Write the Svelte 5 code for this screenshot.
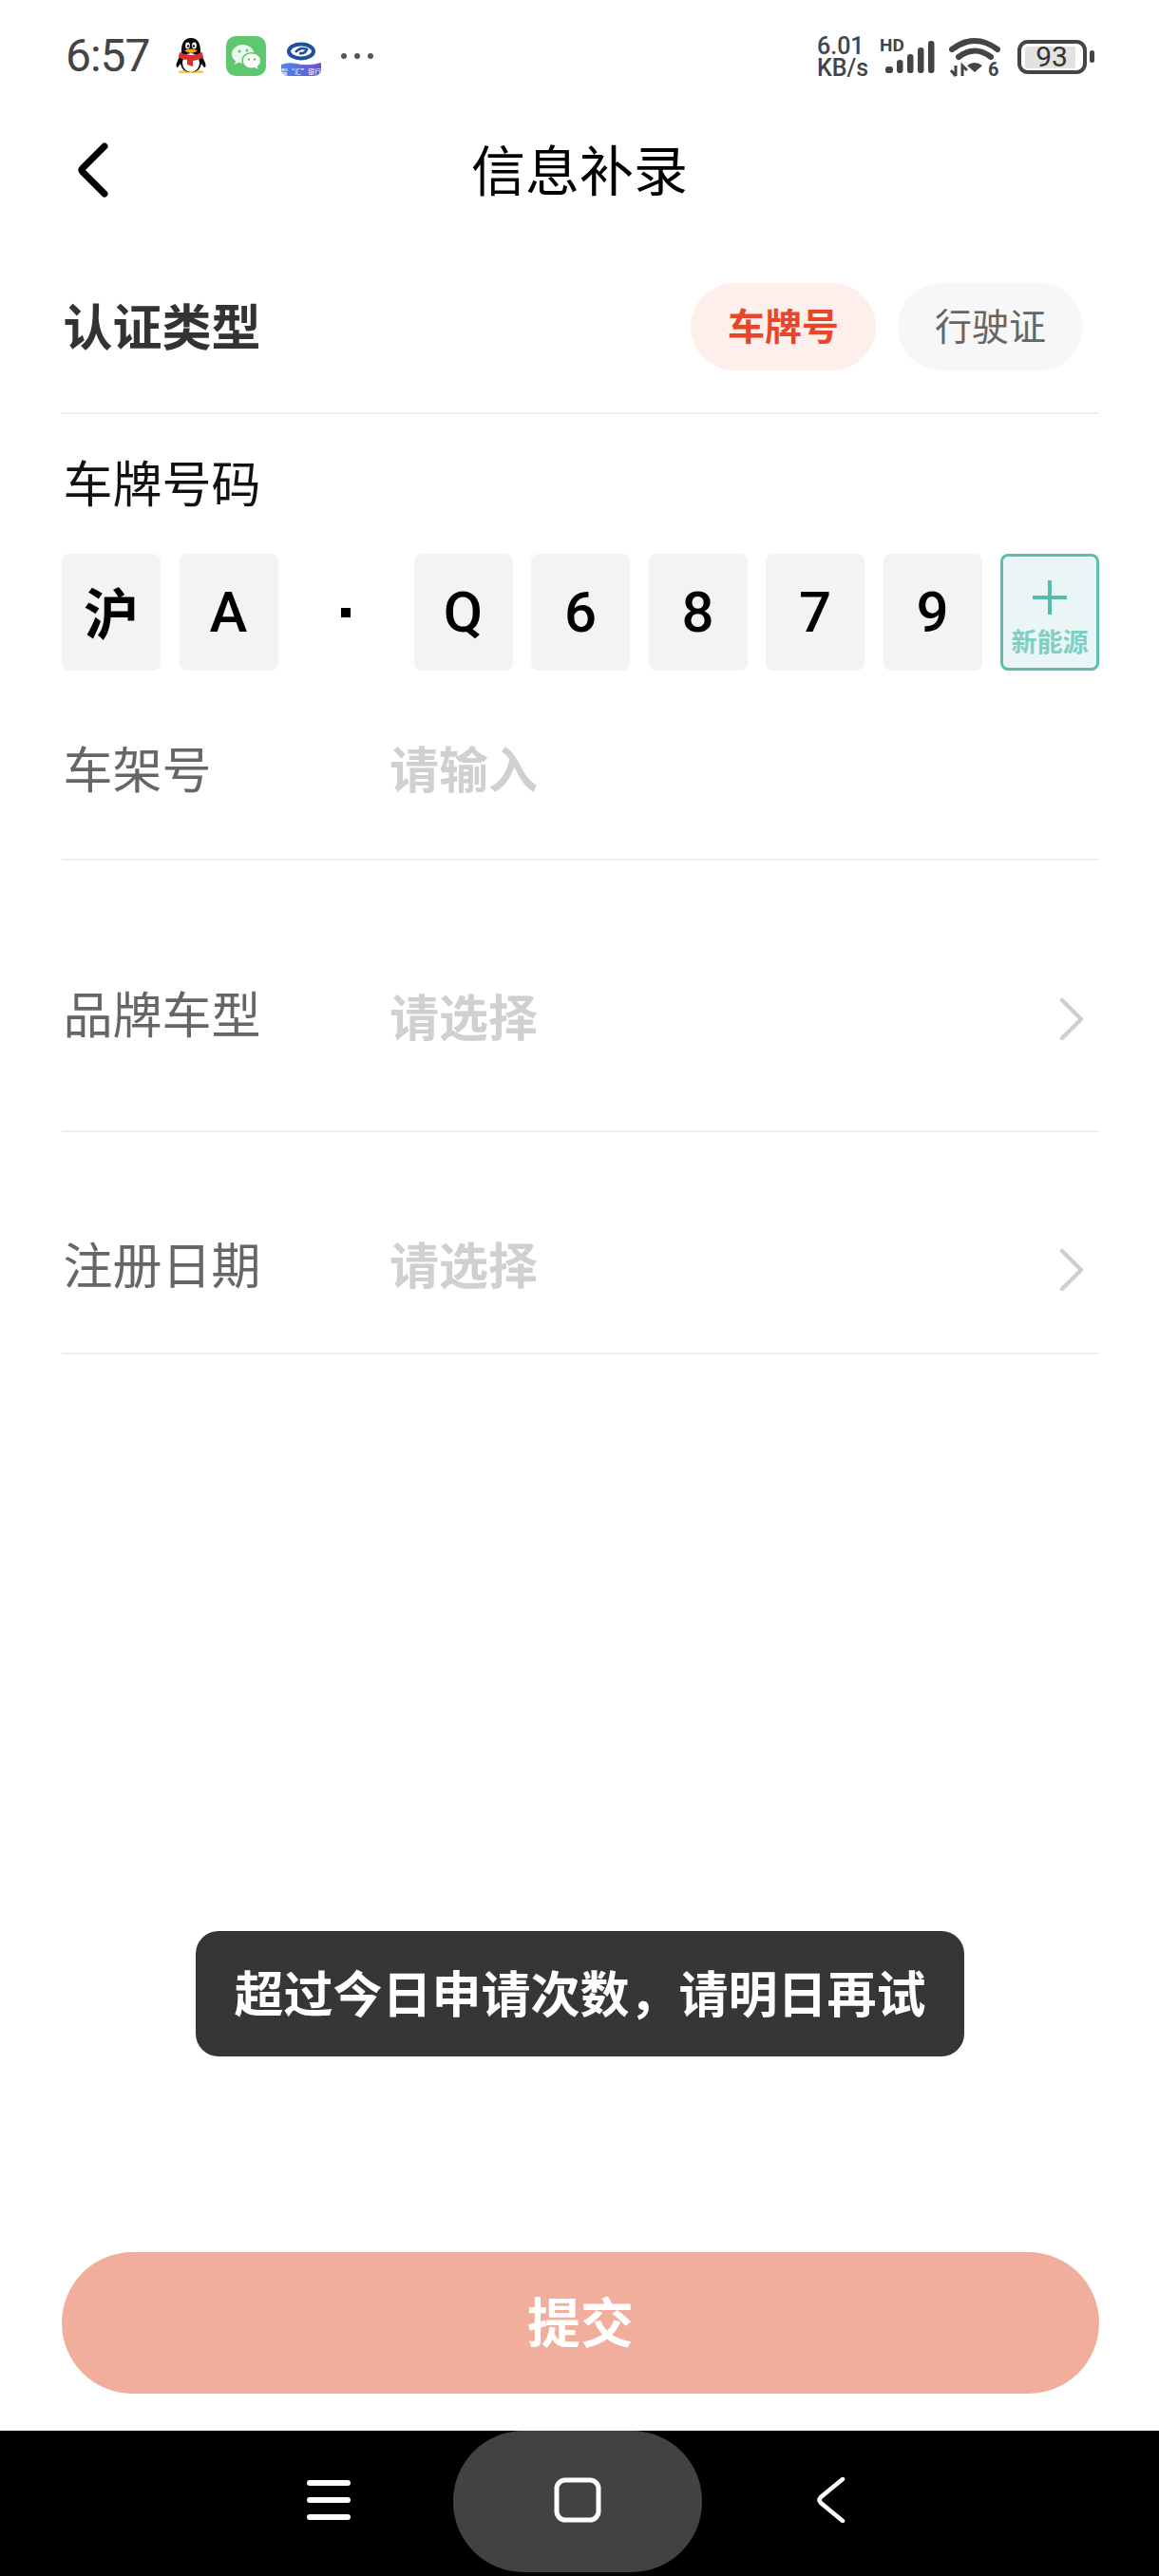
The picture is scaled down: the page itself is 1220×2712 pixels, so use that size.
<script>
  const plate = ["沪", "A", "·", "Q", "6", "8", "7", "9"];
  const arrowBack = "M30 4 L7 27 Q5 29 7 31 L30 54";
</script>

<div class="page">
  <main class="main">
    <!-- status bar -->
    <div class="status">
      <span class="time">6:57</span>
      <svg class="qq" viewBox="0 0 32 38" width="32" height="38">
        <path d="M5 37 Q2 37 3 35 L10 33 L22 33 L29 35 Q30 37 27 37 Z" fill="#f4c96a" />
        <path d="M16 0 C8 0 6 7 6 13 C6 17 4 19 2 24 C0 28 0 31 2 31 L5 27 C6 33 10 36 16 36 C22 36 26 33 27 27 L30 31 C32 31 32 28 30 24 C28 19 26 17 26 13 C26 7 24 0 16 0 Z" fill="#0a0a0a" />
        <ellipse cx="16" cy="26" rx="9" ry="10" fill="#fff" />
        <path d="M4 15 Q16 21 28 15 L29 21 Q20 24 18 24 L18 30 L12 28 L12 23 Q6 23 3 20 Z" fill="#d8302c" />
        <ellipse cx="12.5" cy="8" rx="2.4" ry="3.4" fill="#fff" />
        <ellipse cx="19.5" cy="8" rx="2.4" ry="3.4" fill="#fff" />
        <circle cx="13" cy="8.5" r="1.2" fill="#111" />
        <circle cx="19" cy="8.5" r="1.2" fill="#111" />
        <path d="M9 13 Q16 10 23 13 Q16 19 9 13 Z" fill="#f5a623" />
      </svg>
      <svg class="wechat" viewBox="0 0 42 42" width="42" height="42">
        <rect width="42" height="42" rx="10" fill="#5ec86f" />
        <path d="M18 9 C11 9 6 13.5 6 19 C6 22 7.5 24.5 10 26.3 L9 30 L13.2 27.8 C14.5 28.2 15.8 28.4 17 28.4 C16.6 27.4 16.5 26.6 16.5 25.7 C16.5 20.8 21 17 26.8 17 L29.4 17.2 C28 12.6 23.5 9 18 9 Z" fill="#e9f8ec" />
        <path d="M27 18.5 C21.8 18.5 18 22 18 26 C18 30 21.8 33.5 27 33.5 C28 33.5 29.2 33.3 30.2 33 L33.5 34.8 L32.7 31.8 C34.8 30.3 36 28.3 36 26 C36 22 32.2 18.5 27 18.5 Z" fill="#fff" />
        <circle cx="14" cy="16" r="1.5" fill="#5ec86f" />
        <circle cx="22" cy="15" r="1.5" fill="#5ec86f" />
        <circle cx="24" cy="24.5" r="1.2" fill="#5ec86f" />
        <circle cx="30" cy="24.5" r="1.2" fill="#5ec86f" />
      </svg>
      <svg class="bank" viewBox="0 0 42 42" width="42" height="42">
        <defs>
          <linearGradient id="bankWave" x1="0" x2="1" y1="0" y2="0">
            <stop offset="0" stop-color="#4c86e6" />
            <stop offset="1" stop-color="#6a4fd6" />
          </linearGradient>
        </defs>
        <ellipse cx="21" cy="16" rx="13" ry="7.5" fill="none" stroke="#1f4f9f" stroke-width="4" />
        <path d="M15 17 Q20 11 27 14 Q25 19 19 18" fill="none" stroke="#1f4f9f" stroke-width="2.6" />
        <path d="M0 30 Q8 27 16 29 Q28 32 42 28 L42 35 Q42 42 34 42 L8 42 Q0 42 0 35 Z" fill="url(#bankWave)" />
        <text x="21" y="39.5" class="bank-text">智“汇”银行</text>
      </svg>
      <span class="dots"><i></i><i></i><i></i></span>

      <div class="status-right">
        <div class="speed">
          <span>6.01</span>
          <span>KB/s</span>
        </div>
        <svg viewBox="0 0 58 40" width="58" height="40" class="signal">
          <text x="0" y="14" class="hd">HD</text>
          <rect x="6" y="30" width="8" height="7" rx="3" fill="#444" />
          <rect x="18" y="23" width="6.5" height="14" rx="3" fill="#444" />
          <rect x="29" y="17" width="6.5" height="20" rx="3" fill="#444" />
          <rect x="40" y="10" width="6.5" height="27" rx="3" fill="#444" />
          <rect x="51" y="3" width="6.5" height="34" rx="3" fill="#444" />
        </svg>
        <svg viewBox="0 -6 54 54" width="54" height="54" class="wifi">
          <path d="M3 13 Q27 -5 51 13" fill="none" stroke="#444" stroke-width="6" stroke-linecap="round" />
          <path d="M10 21 Q27 8 44 21" fill="none" stroke="#444" stroke-width="6" stroke-linecap="round" />
          <path d="M19 30 Q27 24 35 30 L27 37 Z" fill="#444" />
          <path d="M7 30 L7 41 M2 35 L7 41" fill="none" stroke="#444" stroke-width="3" />
          <path d="M14 41 L14 30 L19 35" fill="none" stroke="#444" stroke-width="3" />
          <text x="41" y="41" class="wifi-six">6</text>
        </svg>
        <svg viewBox="0 0 81 36" width="81" height="36" class="battery">
          <rect x="2" y="2" width="69" height="32" rx="9" fill="none" stroke="#444" stroke-width="4" />
          <rect x="8" y="7" width="53" height="23" rx="2" fill="#e2e2e2" />
          <text x="36" y="28" class="battery-text">93</text>
          <rect x="76" y="11" width="5" height="13" rx="2.5" fill="#444" />
        </svg>
      </div>
    </div>

    <!-- title bar -->
    <header class="nav">
      <svg class="back" viewBox="0 0 36 58" width="36" height="58">
        <path d={arrowBack} fill="none" stroke="#000" stroke-width="7" stroke-linecap="round" />
      </svg>
      <h1>信息补录</h1>
    </header>

    <section class="form">
      <div class="auth">
        <span class="auth-title">认证类型</span>
        <div class="tabs">
          <span class="tab active">车牌号</span>
          <span class="tab">行驶证</span>
        </div>
      </div>

      <div class="plate-label">车牌号码</div>
      <div class="plate">
        {#each plate as ch}
          {#if ch === "·"}
            <span class="sep"></span>
          {:else}
            <span class="cell" class:zh={ch === "沪"}>{ch}</span>
          {/if}
        {/each}
        <span class="cell-new">
          <svg viewBox="0 0 36 36" width="36" height="36">
            <path d="M18 1 V35 M1 18 H35" stroke="#52bdac" stroke-width="4" stroke-linecap="round" />
          </svg>
          <span>新能源</span>
        </span>
      </div>

      <div class="row row-vin">
        <span class="label">车架号</span>
        <span class="hint">请输入</span>
      </div>
      <div class="row row-brand">
        <span class="label">品牌车型</span>
        <span class="hint shift">请选择</span>
        <svg class="more" viewBox="0 0 26 46" width="26" height="46">
          <path d="M3 3 L23 23 L3 43" fill="none" stroke="#cfcfcf" stroke-width="4.5" stroke-linecap="round" stroke-linejoin="round" />
        </svg>
      </div>
      <div class="row row-date">
        <span class="label">注册日期</span>
        <span class="hint">请选择</span>
        <svg class="more" viewBox="0 0 26 46" width="26" height="46">
          <path d="M3 3 L23 23 L3 43" fill="none" stroke="#cfcfcf" stroke-width="4.5" stroke-linecap="round" stroke-linejoin="round" />
        </svg>
      </div>
    </section>

    <button class="submit">提交</button>
  </main>

  <!-- system navigation -->
  <footer class="sysbar">
    <svg viewBox="0 0 46 42" width="46" height="42" class="sys-menu">
      <path d="M3 3 H43 M3 21 H43 M3 39 H43" stroke="#fff" stroke-width="6" stroke-linecap="round" />
    </svg>
    <span class="home">
      <svg viewBox="0 0 50 48" width="50" height="48">
        <rect x="3" y="3" width="44" height="42" rx="9" fill="none" stroke="#fff" stroke-width="5" />
      </svg>
    </span>
    <svg viewBox="0 0 30 48" width="30" height="48" class="sys-back">
      <path d="M27 2 L4 21 Q1 24 4 27 L27 46" fill="none" stroke="#fff" stroke-width="4.5" stroke-linecap="round" />
    </svg>
  </footer>

  <div class="toast">超过今日申请次数&#65292;请明日再试</div>
</div>

<style>
  :global(body) {
    margin: 0;
    background: #fff;
  }

  .page {
    position: relative;
    width: 1220px;
    height: 2712px;
    display: flex;
    flex-direction: column;
    overflow: hidden;
    font-family: "Noto Sans CJK SC", "Noto Sans", sans-serif;
    color: #111;
  }

  .main {
    flex: 1;
    display: flex;
    flex-direction: column;
    padding: 0 63px 39px 65px;
  }

  /* status bar */
  .status {
    height: 118px;
    display: flex;
    align-items: center;
    padding: 0 5px 0 4px;
    color: #444;
  }

  .time {
    font-family: Roboto, sans-serif;
    font-size: 48px;
    font-weight: 400;
    letter-spacing: -1px;
    width: 88px;
    line-height: 1;
    white-space: nowrap;
  }

  .qq {
    margin-left: 28px;
  }

  .wechat {
    margin-left: 21px;
  }

  .bank {
    margin-left: 16px;
  }

  .bank-text {
    font-size: 7px;
    fill: #fff;
    text-anchor: middle;
  }

  .dots {
    display: flex;
    gap: 8px;
    margin-left: 21px;
  }

  .dots i {
    width: 6px;
    height: 6px;
    border-radius: 50%;
    background: #555;
  }

  .status-right {
    margin-left: auto;
    display: flex;
    align-items: center;
    margin-top: 1px;
  }

  .speed {
    width: 58px;
    display: flex;
    flex-direction: column;
    font-family: Roboto, sans-serif;
    font-weight: 500;
    font-size: 25px;
    line-height: 23px;
    color: #444;
  }

  .signal {
    margin-left: 8px;
    overflow: visible;
  }

  .hd {
    font-family: Roboto, sans-serif;
    font-weight: 700;
    font-size: 19px;
    fill: #444;
  }

  .wifi {
    margin-left: 15px;
  }

  .wifi-six {
    font-family: Roboto, sans-serif;
    font-weight: 700;
    font-size: 20px;
    fill: #444;
  }

  .battery {
    margin-left: 18px;
  }

  .battery-text {
    font-family: Roboto, sans-serif;
    font-size: 30px;
    fill: #333;
    text-anchor: middle;
  }

  /* title */
  .nav {
    position: relative;
    height: 122px;
    display: flex;
    align-items: center;
    justify-content: center;
    padding: 0 2px 6px 0;
    box-sizing: border-box;
  }

  .back {
    position: absolute;
    left: 15px;
    top: 32px;
  }

  .nav h1 {
    margin: 0;
    font-size: 57px;
    font-weight: 400;
    line-height: 80px;
    color: #000;
  }

  /* form */
  .form {
    display: flex;
    flex-direction: column;
  }

  .auth {
    height: 180px;
    margin-top: 14px;
    display: flex;
    align-items: center;
    justify-content: space-between;
    border-bottom: 2px solid #eee;
    box-sizing: content-box;
  }

  .auth-title {
    font-size: 52px;
    font-weight: 700;
    line-height: 60px;
    color: #333;
    padding: 0 0 4px 1.5px;
  }

  .tabs {
    display: flex;
    gap: 23px;
    padding-right: 17px;
  }

  .tab {
    width: 195px;
    height: 92px;
    border-radius: 46px;
    background: #f7f7f7;
    color: #666;
    font-size: 39px;
    display: flex;
    align-items: center;
    justify-content: center;
    padding-bottom: 6px;
    box-sizing: border-box;
  }

  .tab.active {
    background: #fdefec;
    color: #e8452a;
    font-weight: 700;
  }

  .plate-label {
    margin-top: 41px;
    padding-left: 1.5px;
    font-size: 52px;
    line-height: 60px;
    color: #111;
  }

  .plate {
    margin-top: 46px;
    display: grid;
    grid-template-columns: repeat(9, 1fr);
    gap: 19.5px;
    height: 123px;
  }

  .cell,
  .sep,
  .cell-new {
    display: flex;
    align-items: center;
    justify-content: center;
    border-radius: 8px;
    box-sizing: border-box;
  }

  .cell {
    background: #f2f3f5;
    font-family: Roboto, sans-serif;
    font-size: 60px;
    font-weight: 500;
    color: #000;
  }

  .cell.zh {
    font-family: "Noto Sans CJK SC", sans-serif;
    font-size: 58px;
    font-weight: 700;
    padding-bottom: 4px;
  }

  .sep::before {
    content: "";
    width: 10px;
    height: 10px;
    background: #000;
  }

  .cell-new {
    flex-direction: column;
    justify-content: flex-start;
    border: 3px solid #5cbfae;
    background: #e9f6f5;
    color: #7fcfc4;
    padding-top: 25px;
  }

  .cell-new span {
    font-size: 27px;
    font-weight: 700;
    line-height: 32px;
    margin-top: 12px;
    white-space: nowrap;
  }

  .row {
    display: flex;
    align-items: center;
    border-bottom: 2px solid #efefef;
  }

  .row-vin {
    padding: 72px 0 66px;
  }

  .row-brand {
    padding: 130px 0 94px;
  }

  .row-date {
    padding: 108px 0 64px;
  }

  .label {
    width: 346px;
    padding-left: 1.5px;
    box-sizing: border-box;
    font-size: 52px;
    line-height: 60px;
    color: #666;
  }

  .hint {
    flex: 1;
    font-size: 52px;
    font-weight: 700;
    line-height: 60px;
    color: #d0d0d0;
    margin-left: -1px;
  }

  .hint.shift {
    margin-top: 3px;
    margin-bottom: -3px;
  }

  .more {
    margin: 7px 16px -7px 0;
  }

  .submit {
    margin-top: auto;
    height: 149px;
    width: 1092px;
    border: none;
    border-radius: 75px;
    background: #f2ae9d;
    color: #fff;
    font-family: inherit;
    font-size: 56px;
    font-weight: 700;
    padding: 0 0 8px;
  }

  /* system bar */
  .sysbar {
    position: relative;
    height: 153px;
    background: #000;
    flex-shrink: 0;
    display: flex;
    align-items: flex-start;
    padding-left: 323px;
  }

  .sys-menu {
    margin-top: 52px;
  }

  .home {
    width: 262px;
    height: 149px;
    margin: 0 121px 0 108px;
    border-radius: 74px;
    background: #424242;
    display: flex;
    align-items: center;
    justify-content: center;
    padding-bottom: 4px;
    box-sizing: border-box;
  }

  .sys-back {
    margin-top: 49px;
  }

  .toast {
    position: absolute;
    top: 2033px;
    left: 206px;
    width: 809px;
    height: 132px;
    box-sizing: border-box;
    padding-bottom: 5px;
    border-radius: 24px;
    background: #363636;
    color: #fff;
    font-size: 52px;
    font-weight: 700;
    display: flex;
    align-items: center;
    justify-content: center;
    white-space: nowrap;
  }
</style>
